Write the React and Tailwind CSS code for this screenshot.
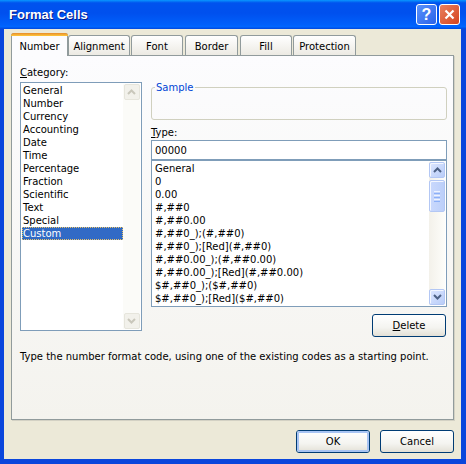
import React from 'react';

const CATEGORIES = ['General', 'Number', 'Currency', 'Accounting', 'Date', 'Time', 'Percentage', 'Fraction', 'Scientific', 'Text', 'Special', 'Custom'];

const FORMATS = [
  'General',
  '0',
  '0.00',
  '#,##0',
  '#,##0.00',
  '#,##0_);(#,##0)',
  '#,##0_);[Red](#,##0)',
  '#,##0.00_);(#,##0.00)',
  '#,##0.00_);[Red](#,##0.00)',
  '$#,##0_);($#,##0)',
  '$#,##0_);[Red]($#,##0)',
];

// small XP style chevron for scroll buttons
function Chevron({ up, color }) {
  return (
    <svg width="9" height="6" viewBox="0 0 9 6">
      <path d={up ? 'M1 5 L4.5 1.5 L8 5' : 'M1 1 L4.5 4.5 L8 1'} fill="none" stroke={color} strokeWidth="2" />
    </svg>
  );
}

function BlueScrollButton({ up }) {
  return (
    <div className="w-[16px] h-[16px] rounded-[2px] border border-[#b3c7f4] bg-[linear-gradient(135deg,#dce6ff,#b9cdf8)] shadow-[inset_1px_1px_0_#f4f7ff] flex items-center justify-center">
      <Chevron up={up} color="#4d6185" />
    </div>
  );
}

function GrayScrollButton({ up }) {
  return (
    <div className="w-[16px] h-[16px] rounded-[2px] border border-[#e6e5dc] bg-[#f2f1eb] flex items-center justify-center">
      <Chevron up={up} color="#c9c7bb" />
    </div>
  );
}

function XpButton({ children, isDefault }) {
  return (
    <div className="w-[74px] h-[23px] rounded-[3px] border border-[#003c74] bg-[linear-gradient(180deg,#ffffff_0%,#f4f4f0_60%,#e3e0d6_100%)] flex items-center justify-center">
      <div className={isDefault
        ? 'w-full h-full rounded-[2px] border-2 border-[#a8c4f3] flex items-center justify-center'
        : 'w-full h-full flex items-center justify-center'}>
        {children}
      </div>
    </div>
  );
}

export default function App() {
  const tabs = [
    { name: 'Alignment', w: 'w-[62px]', ml: 'ml-0' },
    { name: 'Font', w: 'w-[52px]', ml: 'ml-[1px]' },
    { name: 'Border', w: 'w-[53px]', ml: 'ml-[2px]' },
    { name: 'Fill', w: 'w-[52px]', ml: 'ml-[2px]' },
    { name: 'Protection', w: 'w-[63px]', ml: 'ml-[1px]' },
  ];

  return (
    <div className="w-[466px] h-[464px] flex flex-col bg-[#0a46dc] font-['DejaVu_Sans',Verdana,sans-serif] text-[10px] text-black leading-[13px]">
      {/* Title bar */}
      <div className="h-[29px] shrink-0 flex items-center bg-[linear-gradient(180deg,#0997ff_0%,#0053ee_10%,#0050ee_45%,#0060fb_85%,#0066ff_92%,#0047dd_100%)]">
        <span className="ml-[9px] font-['Liberation_Sans',Arial,sans-serif] text-[13px] font-bold text-white [text-shadow:1px_1px_0_#0a1883]">Format Cells</span>
        <div className="ml-auto mr-[6px] flex gap-[2px]">
          <div className="w-[21px] h-[21px] rounded-[3px] border border-white bg-[linear-gradient(135deg,#5a92fb,#2a62e9)] flex items-center justify-center text-white font-bold font-['Liberation_Sans',Arial,sans-serif] text-[16px] leading-none">?</div>
          <div className="w-[21px] h-[21px] rounded-[3px] border border-white bg-[linear-gradient(135deg,#e8805f,#d6441f)] flex items-center justify-center">
            <svg width="11" height="11" viewBox="0 0 11 11">
              <path d="M1.5 1.5 L9.5 9.5 M9.5 1.5 L1.5 9.5" stroke="#fff" strokeWidth="2.2" />
            </svg>
          </div>
        </div>
      </div>

      {/* Dialog body */}
      <div className="flex-1 ml-[4px] mr-[5px] mb-[5px] bg-[#ece9d8] pt-[4px] px-[7px] flex flex-col">
        {/* Tabs */}
        <div className="h-[22px] flex items-end shrink-0">
          <div className="relative z-10 -mb-px w-[57px] h-[23px] rounded-t-[3px] border border-[#919b9c] border-b-0 bg-[#fcfcfe] flex flex-col">
            <div className="h-[3px] -mx-px -mt-px rounded-t-[3px] bg-[linear-gradient(180deg,#e68b2c,#ffc83c)]" />
            <div className="flex-1 flex items-center justify-center pt-[1px]">Number</div>
          </div>
          {tabs.map((t) => (
            <div key={t.name} className={`${t.w} ${t.ml} h-[20px] pt-[2px] rounded-t-[3px] border border-[#919b9c] border-b-0 bg-[linear-gradient(180deg,#ffffff,#eceae3)] flex items-center justify-center`}>
              {t.name}
            </div>
          ))}
        </div>

        {/* Panel */}
        <div className="h-[365px] border border-[#919b9c] shadow-[1px_1px_0_#d3d1c4] bg-[linear-gradient(180deg,#fcfcfe,#f4f3ee)] pt-[10px] pl-[8px] flex flex-col">
          <div className="flex gap-[9px]">
            {/* Category column */}
            <div className="w-[122px] flex flex-col">
              <div className="h-[13px] mb-[3px]"><span className="underline underline-offset-[1px]">C</span>ategory:</div>
              <div className="h-[249px] border border-[#7f9db9] bg-white p-[1px] flex">
                <div className="flex-1 flex flex-col">
                  {CATEGORIES.map((c) => (
                    <div key={c} className={c === 'Custom'
                      ? 'h-[13px] pl-[1px] bg-[#316ac5] text-white outline-1 outline-dotted outline-[#e9c46a] -outline-offset-1'
                      : 'h-[13px] pl-[1px]'}>
                      {c}
                    </div>
                  ))}
                </div>
                <div className="w-[17px] bg-[#fbfbf8] flex flex-col justify-between items-center">
                  <GrayScrollButton up />
                  <GrayScrollButton />
                </div>
              </div>
            </div>

            {/* Right column */}
            <div className="w-[296px] flex flex-col">
              <fieldset className="mt-[15px] h-[39px] border border-[#d0d0bf] rounded-[3px]">
                <legend className="ml-[3px] px-[1px] text-[#0046d5] leading-[13px]">Sample</legend>
              </fieldset>
              <div className="h-[13px] mt-[6px] mb-[1px]"><span className="underline underline-offset-[1px]">T</span>ype:</div>
              <div className="h-[20px] border border-[#7f9db9] bg-white pl-[3px] flex items-center">00000</div>
              <div className="h-[147px] border border-[#7f9db9] bg-white p-[1px] flex">
                <div className="flex-1 flex flex-col overflow-hidden pl-[2px]">
                  {FORMATS.map((f) => (
                    <div key={f} className="h-[13px] shrink-0 whitespace-nowrap">{f}</div>
                  ))}
                </div>
                <div className="w-[16px] bg-[linear-gradient(90deg,#f3f1ea,#fdfdfa)] flex flex-col">
                  <BlueScrollButton up />
                  <div className="mt-[2px] h-[32px] rounded-[2px] border border-[#b3c7f4] bg-[linear-gradient(90deg,#cad9fd,#bccff9)] shadow-[inset_1px_1px_0_#f4f7ff] flex flex-col items-center justify-center gap-[1px]">
                    <div className="w-[6px] h-px bg-[#eef3ff]" />
                    <div className="w-[6px] h-px bg-[#8cb0f8]" />
                    <div className="w-[6px] h-px bg-[#eef3ff]" />
                    <div className="w-[6px] h-px bg-[#8cb0f8]" />
                    <div className="w-[6px] h-px bg-[#eef3ff]" />
                    <div className="w-[6px] h-px bg-[#8cb0f8]" />
                  </div>
                  <div className="flex-1" />
                  <BlueScrollButton />
                </div>
              </div>
              <div className="mt-[7px] self-end mr-[1px]">
                <XpButton><span><span className="underline underline-offset-[1px]">D</span>elete</span></XpButton>
              </div>
            </div>
          </div>
          <div className="mt-[13px]">Type the number format code, using one of the existing codes as a starting point.</div>
        </div>

        {/* Bottom buttons */}
        <div className="mt-[10px] flex justify-end gap-[10px] pr-0">
          <XpButton isDefault>OK</XpButton>
          <XpButton>Cancel</XpButton>
        </div>
      </div>
    </div>
  );
}
